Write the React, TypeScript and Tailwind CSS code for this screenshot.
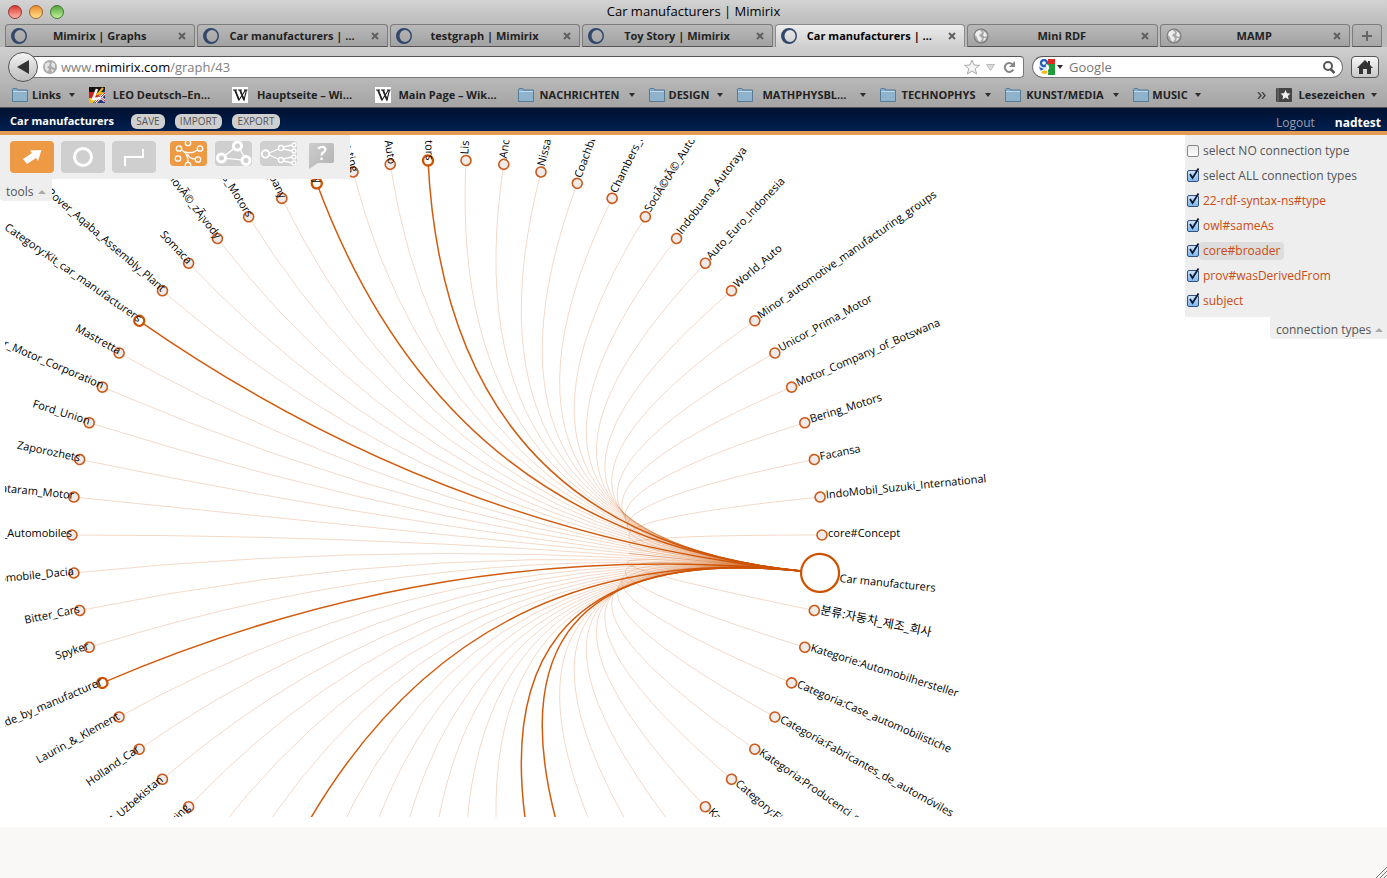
import { ReactNode, useState } from "react";
import clsx from "clsx";

const COUNT = 62;
const ROOT = 61;
const RADIUS = 375;
const ROOT_SIZE = 19;
const STEP = 360 / COUNT;

// nodes are numbered counter-clockwise, starting at three o'clock
const labels: Record<number, string> = {
  0: "core#Concept",
  1: "IndoMobil_Suzuki_International",
  2: "Facansa",
  3: "Bering_Motors",
  4: "Motor_Company_of_Botswana",
  5: "Unicor_Prima_Motor",
  6: "Minor_automotive_manufacturing_groups",
  7: "World_Auto",
  8: "Auto_Euro_Indonesia",
  9: "Indobuana_Autoraya",
  10: "SociÃ©tÃ©_Auto",
  11: "Chambers_M",
  12: "Coachbu",
  13: "Nissa",
  14: "Anc",
  15: "Lis",
  16: "otors",
  17: "Auto",
  18: "r_ting",
  19: "Industry",
  20: "Company",
  21: "s_Motors",
  22: "novÃ©_zÃ¡vody",
  23: "Somaca",
  24: "Rover_Aqaba_Assembly_Plant",
  25: "Category:Kit_car_manufacturers",
  26: "Mastretta",
  27: "r_Motor_Corporation",
  28: "Ford_Union",
  29: "Zaporozhets",
  30: "ataram_Motor",
  31: "_Automobiles",
  32: "omobile_Dacia",
  33: "Bitter_Cars",
  34: "Spyker",
  35: "ade_by_manufacturer",
  36: "Laurin_&_Klement",
  37: "Holland_Car",
  38: "M_Uzbekistan",
  39: "ring",
  54: "Kat",
  55: "Category:Fi",
  56: "Kategoria:Producenci_s",
  57: "Categoría:Fabricantes_de_automóviles",
  58: "Categoria:Case_automobilistiche",
  59: "Kategorie:Automobilhersteller",
  60: "분류:자동차_제조_회사",
  61: "Car manufacturers",
};

const highlighted = [16, 19, 25, 35, 42, 49, 50];
const nodes = Array.from({ length: COUNT }, (_, i) => i);

function point(i: number, radius = RADIUS) {
  const a = (-i * STEP * Math.PI) / 180;
  return { x: radius * Math.cos(a), y: radius * Math.sin(a) };
}

// every edge bends through the centre and stops at the rim of the root node
function Edge({ index }: { index: number }) {
  const from = point(index);
  const to = point(ROOT, RADIUS - ROOT_SIZE);
  const strong = highlighted.includes(index);
  return (
    <path
      d={`M${from.x} ${from.y}Q0 0 ${to.x} ${to.y}`}
      fill="none"
      stroke="#cd5200"
      strokeWidth={strong ? 1.5 : 1}
      strokeOpacity={strong ? 0.95 : 0.22}
    />
  );
}

function Node({ index }: { index: number }) {
  const strong = highlighted.includes(index);
  const root = index === ROOT;
  const left = index > 15 && index < 47;
  const angle = -index * STEP;
  return (
    <g transform={`rotate(${angle}) translate(${RADIUS} 0)`}>
      <circle
        r={root ? ROOT_SIZE : 5}
        fill={root || strong ? "#fff" : "#eeebe9"}
        stroke={root || strong ? "#cd5200" : "#cb5a1c"}
        strokeWidth={root ? 2.2 : strong ? 2.4 : 1.6}
      />
      {labels[index] && (
        <text
          className={index === 60 ? "text-xs" : undefined}
          transform={left ? "rotate(180)" : undefined}
          textAnchor={left ? "end" : "start"}
          x={left ? 0 : root ? 20 : 6}
          y={root ? 7 : 2}
        >
          {labels[index]}
        </text>
      )}
    </g>
  );
}

function Graph() {
  return (
    <svg
      className="block h-[677px] w-full overflow-hidden font-['Open_Sans','Noto_Sans_CJK_KR',sans-serif] text-[11px]"
      fill="#000"
    >
      <g transform="translate(442 395)">
        {nodes
          .filter((i) => !highlighted.includes(i))
          .map((i) => (
            <Edge key={i} index={i} />
          ))}
        {highlighted.map((i) => (
          <Edge key={i} index={i} />
        ))}
        {nodes.map((i) => (
          <Node key={i} index={i} />
        ))}
      </g>
    </svg>
  );
}

function RingIcon() {
  return (
    <svg viewBox="0 0 16 16" className="size-4 shrink-0">
      <path
        fillRule="evenodd"
        fill="#33476b"
        d="M8 0a8 8 0 1 0 0 16A8 8 0 0 0 8 0ZM9 2a5.500 6 0 1 1 0 12a5.500 6 0 1 1 0-12Z"
      />
    </svg>
  );
}

function GlobeIcon() {
  return (
    <svg viewBox="0 0 16 16" className="size-4 shrink-0">
      <circle cx="8" cy="8" r="7.500" fill="#777" />
      <circle cx="8" cy="8" r="6.500" fill="#a9a9a9" />
      <path
        fill="#eee"
        d="M3 4l3-2 2 1 1 2-2 1-1 2 2 1 1 2-2 3-2-2-1-3-2-2zM10 3l3 2 1 3-2 1-2-2 1-2zM11 10l2 0-1 2-2 1z"
      />
    </svg>
  );
}

function FolderIcon() {
  return (
    <svg viewBox="0 0 16 16" className="size-4 shrink-0">
      <path
        d="M.5 4V2.500q0-1 1-1h3q1 0 1 1.500h10v11.500H.5z"
        fill="#86abc8"
        stroke="#557a96"
      />
      <path d="M1 5h14v9H1z" fill="#8fb3cd" />
      <path d="M1 4.500h14" stroke="#c1dbea" />
    </svg>
  );
}

function WikiIcon() {
  return (
    <svg viewBox="0 0 16 16" className="size-4 shrink-0">
      <path d="M0 0h16v16H0z" fill="#fff" />
      <path
        d="M1 3h4M6 3h4M12 3h3.500M3 3l4 10L13.500 3M8 3l4 10 2.500-10"
        fill="none"
        stroke="#222"
        strokeWidth="1.100"
      />
      <path d="M3 3l4 10M8 3l4 10" stroke="#222" strokeWidth="1.800" />
    </svg>
  );
}

function LeoIcon() {
  return (
    <svg viewBox="0 0 16 16" className="size-4 shrink-0">
      <path d="M0 0h16v5H0z" fill="#16120f" />
      <path d="M0 5h16v6H0z" fill="#d3201c" />
      <path d="M0 11h16v5H0z" fill="#f1bb19" />
      <path d="M16 2v14H4z" fill="#263877" />
      <path d="M16 6L6 16M10 9l6 5" stroke="#fff" strokeWidth="2.500" />
      <path d="M16 6L6 16M10 9l6 5" stroke="#d3201c" />
      <path
        d="M8 2L4 12l8-1"
        fill="none"
        stroke="#fff"
        strokeWidth="2.500"
      />
      <path d="M14 1l-5 6 5-1" fill="none" stroke="#f1bb19" strokeWidth="2" />
    </svg>
  );
}

function DownArrow() {
  return (
    <svg viewBox="0 0 6 4" className="h-1 w-1.5 shrink-0">
      <path d="M0 0h6L3 4z" fill="#2d2d2d" />
    </svg>
  );
}

function UpArrow() {
  return (
    <svg viewBox="0 0 8 4" className="h-1 w-2 shrink-0">
      <path d="M0 4h8L4 0z" fill="#aaa" />
    </svg>
  );
}

const tabs = [
  { title: "Mimirix | Graphs", icon: <RingIcon /> },
  { title: "Car manufacturers | …", icon: <RingIcon /> },
  { title: "testgraph | Mimirix", icon: <RingIcon /> },
  { title: "Toy Story | Mimirix", icon: <RingIcon /> },
  { title: "Car manufacturers | …", icon: <RingIcon />, active: true },
  { title: "Mini RDF", icon: <GlobeIcon /> },
  { title: "MAMP", icon: <GlobeIcon /> },
];

function TabStrip() {
  return (
    <div className="flex h-[23px] gap-0.5 px-[5px]">
      {tabs.map((tab, i) => (
        <div
          key={i}
          className={clsx(
            "flex min-w-0 flex-1 items-center rounded-t border-x border-t pr-2 pl-[5px]",
            tab.active
              ? "border-[#8a8a8a] bg-linear-to-b from-[#ededed] to-[#cfcfcf] text-black"
              : "border-b border-[#7c7c7c] border-b-[#555] bg-linear-to-b from-[#b9b9b9] to-[#a2a2a2] pt-px text-[#222]"
          )}
        >
          {tab.icon}
          <button className="min-w-0 flex-1 truncate pr-1.5 text-center font-bold">
            {tab.title}
          </button>
          <button aria-label="Close tab" className="shrink-0">
            <svg viewBox="0 0 8 8" className="size-2">
              <path d="M1 1l6 6M7 1L1 7" stroke="#606060" strokeWidth="2" />
            </svg>
          </button>
        </div>
      ))}
      <button
        aria-label="New tab"
        className="flex w-[30px] items-center justify-center rounded-t border border-[#7c7c7c] border-b-[#555] bg-linear-to-b from-[#b9b9b9] to-[#a6a6a6]"
      >
        <svg viewBox="0 0 10 10" className="size-2.5">
          <path d="M5 0v10M0 5h10" stroke="#666" strokeWidth="2" />
        </svg>
      </button>
    </div>
  );
}

function NavBar() {
  return (
    <div className="flex h-9 items-center gap-2 pt-1 pr-2 pl-2">
      <div className="flex flex-1 items-center">
        <button
          aria-label="Back"
          className="z-10 -mr-4 flex size-[30px] shrink-0 items-center justify-center rounded-full border border-[#555] bg-linear-to-b from-[#f4f4f4] to-[#bdbdbd]"
        >
          <svg viewBox="0 0 12 14" className="h-3.5 w-3">
            <path d="M12 0v14L0 7z" fill="#333" />
          </svg>
        </button>
        <div className="flex h-[22px] flex-1 items-center rounded-r-sm border border-[#777] border-t-[#555] bg-white pr-2 pl-5">
          <svg viewBox="0 0 14 14" className="size-3.5 shrink-0">
            <circle cx="7" cy="7" r="7" fill="#aaa" />
            <path
              fill="#e4e4e4"
              d="M2 4l3-2 2 1-1 3-2 1 2 2-1 3-3-3zM9 2l3 2 0 4-3-1-1-2zM8 9l3 1-2 3z"
            />
          </svg>
          <div className="relative ml-1 flex-1 text-[13px] leading-5">
            <input
              aria-label="Address"
              defaultValue="www.mimirix.com/graph/43"
              className="w-full text-transparent caret-black outline-none"
            />
            <span
              aria-hidden
              className="pointer-events-none absolute inset-0 bg-white text-[#808080]"
            >
              www.<span className="text-black">mimirix.com</span>/graph/43
            </span>
          </div>
          <button aria-label="Bookmark this page">
            <svg viewBox="0 0 16 16" className="size-4">
              <path
                d="M8 1l2 5 5.500.3-4.300 3.500 1.500 5.200L8 12l-4.700 3 1.500-5.200L.5 6.300 6 6z"
                fill="#f4f4f4"
                stroke="#aaa"
              />
            </svg>
          </button>
          <button aria-label="Show history" className="ml-1.5">
            <svg viewBox="0 0 9 7" className="h-[7px] w-[9px]">
              <path d="M.5.500h8L4.500 6.500z" fill="#ddd" stroke="#bbb" />
            </svg>
          </button>
          <button aria-label="Reload" className="ml-2">
            <svg viewBox="0 0 12 12" className="size-3">
              <path
                d="M9.500 3.200A4.500 4.500 0 1 0 10.300 8.500"
                fill="none"
                stroke="#888"
                strokeWidth="2"
              />
              <path d="M12 0v6H6z" fill="#888" />
            </svg>
          </button>
        </div>
      </div>
      <div className="flex h-[22px] w-[311px] items-center rounded-full border border-[#777] border-t-[#555] bg-white pr-[7px] pl-1.5">
        <svg viewBox="0 0 16 16" className="size-4 shrink-0">
          <path d="M9 0h7v5H9z" fill="#e2281e" />
          <path d="M9 5h7v11h-7z" fill="#1f9a3d" />
          <path d="M0 5h9v6H0z" fill="#dfe9f7" />
          <circle cx="5" cy="4" r="3" fill="#fff" stroke="#2760b8" strokeWidth="2.400" />
          <path d="M0 8l5 2-3 2z" fill="#2760b8" />
          <path d="M7 6q4 2 1 5" fill="none" stroke="#fff" strokeWidth="2" />
          <ellipse cx="5.500" cy="13.200" rx="3.500" ry="2.200" fill="#f2b51c" stroke="#fff" />
        </svg>
        <span className="ml-0.5">
          <DownArrow />
        </span>
        <input
          aria-label="Search"
          placeholder="Google"
          className="ml-1.5 min-w-0 flex-1 text-[13px] leading-5 outline-none placeholder:text-[#777]"
        />
        <button aria-label="Go">
          <svg viewBox="0 0 12 13" className="h-[13px] w-3">
            <circle cx="5" cy="5" r="4" fill="none" stroke="#555" strokeWidth="2" />
            <path d="M7.500 8l4 4" stroke="#555" strokeWidth="2.500" />
          </svg>
        </button>
      </div>
      <button
        aria-label="Home"
        className="flex h-[22px] w-7 items-center justify-center rounded-sm border border-[#555] bg-linear-to-b from-[#f8f8f8] to-[#c9c9c9]"
      >
        <svg viewBox="0 0 16 14" className="h-3.5 w-4">
          <path d="M8 0l3 3V1h2v4l3 3h-2v6h-4V9H6v5H2V8H0z" fill="#333" />
        </svg>
      </button>
    </div>
  );
}

interface BookmarkProps {
  icon: ReactNode;
  label: string;
  width: string;
  menu?: boolean;
}

const bookmarks: BookmarkProps[] = [
  { icon: <FolderIcon />, label: "Links", width: "w-[77px]", menu: true },
  { icon: <LeoIcon />, label: "LEO Deutsch–En…", width: "w-[143px]" },
  { icon: <WikiIcon />, label: "Hauptseite – Wi…", width: "w-[143px]" },
  { icon: <WikiIcon />, label: "Main Page – Wik…", width: "w-[143px]" },
  { icon: <FolderIcon />, label: "NACHRICHTEN", width: "w-[131px]", menu: true },
  { icon: <FolderIcon />, label: "DESIGN", width: "w-[88px]", menu: true },
  { icon: <FolderIcon />, label: "MATHPHYSBL…", width: "w-[143px]", menu: true },
  { icon: <FolderIcon />, label: "TECHNOPHYS", width: "w-[125px]", menu: true },
  { icon: <FolderIcon />, label: "KUNST/MEDIA", width: "w-[128px]", menu: true },
  { icon: <FolderIcon />, label: "MUSIC", width: "w-[82px]", menu: true },
];

function Bookmark({ icon, label, width, menu }: BookmarkProps) {
  return (
    <button
      className={clsx(
        "flex shrink-0 items-center pr-3.5 font-bold whitespace-nowrap",
        width
      )}
    >
      {icon}
      <span className={clsx("flex-1 text-center", menu && "pr-1")}>{label}</span>
      {menu && <DownArrow />}
    </button>
  );
}

function BookmarkBar() {
  return (
    <div className="flex h-6 items-center pr-2.5 pl-3 text-[#222]">
      {bookmarks.map((b) => (
        <Bookmark key={b.label} {...b} />
      ))}
      <button aria-label="More bookmarks" className="mr-2.5 ml-auto">
        <svg viewBox="0 0 9 7" className="h-[7px] w-[9px]">
          <path
            d="M1 0l3 3.500L1 7M5 0l3 3.500L5 7"
            fill="none"
            stroke="#444"
            strokeWidth="1.400"
          />
        </svg>
      </button>
      <button className="flex items-center gap-1.5 font-bold">
        <svg viewBox="0 0 16 14" className="h-3.5 w-4">
          <rect width="16" height="14" rx="1" fill="#444" />
          <path d="M2 0v14" stroke="#777" />
          <path
            d="M9.500 2l1.500 3.200 3.500.4-2.600 2.300.8 3.500-3.200-1.800-3.100 1.800.7-3.500-2.600-2.300 3.500-.4z"
            fill="#eee"
          />
        </svg>
        Lesezeichen
        <DownArrow />
      </button>
    </div>
  );
}

function BrowserChrome() {
  return (
    <div className="border-b border-[#555] bg-[#c4c4c4] font-['Open_Sans',sans-serif] text-[11px]">
      <div className="relative flex h-6 items-center justify-center bg-linear-to-b from-[#d3d3d3] to-[#bcbcbc]">
        <div className="absolute left-2 flex gap-[7px]">
          <button
            aria-label="Close"
            className="size-3.5 rounded-full border border-[#973232] bg-linear-to-b from-[#d5302f] to-[#ffb1a8]"
          />
          <button
            aria-label="Minimize"
            className="size-3.5 rounded-full border border-[#a36427] bg-linear-to-b from-[#e88a26] to-[#ffe48b]"
          />
          <button
            aria-label="Zoom"
            className="size-3.5 rounded-full border border-[#3f7a31] bg-linear-to-b from-[#57a540] to-[#bdf296]"
          />
        </div>
        <h1 className="text-[13px] text-black">Car manufacturers | Mimirix</h1>
      </div>
      <div className="bg-[#bababa]">
        <TabStrip />
      </div>
      <div className="bg-linear-to-b from-[#cfcfcf] to-[#a4a4a4]">
        <NavBar />
        <BookmarkBar />
      </div>
    </div>
  );
}

function AppHeader() {
  return (
    <header className="flex h-[27px] items-center border-b-4 border-[#e49c55] bg-linear-to-b from-[#001030] to-[#002050] pt-[3px] pr-1.5 pl-2.5 text-white">
      <h2 className="w-[121px] text-[11px] font-bold whitespace-nowrap">Car manufacturers</h2>
      <div className="flex gap-2.5 text-[10px] leading-[15px] text-[#555]">
        <button className="h-[15px] w-[34px] rounded-md bg-[#cfcfcf]">SAVE</button>
        <button className="h-[15px] w-[47px] rounded-md bg-[#cfcfcf]">IMPORT</button>
        <button className="h-[15px] w-12 rounded-md bg-[#cfcfcf]">EXPORT</button>
      </div>
      <nav className="ml-auto flex gap-5 pt-[3px] text-xs">
        <a href="#logout" className="text-[#9a9dab]">
          Logout
        </a>
        <a href="#user" className="font-bold">
          nadtest
        </a>
      </nav>
    </header>
  );
}

function ToolButton({
  label,
  active,
  small,
  children,
}: {
  label: string;
  active?: boolean;
  small?: boolean;
  children: ReactNode;
}) {
  return (
    <button
      aria-label={label}
      className={clsx(
        "overflow-hidden rounded",
        small ? "h-[25px] w-[37px]" : "h-8 w-11",
        active ? "bg-[#ee9a45]" : "bg-[#cfcfcf]"
      )}
    >
      {children}
    </button>
  );
}

function ToolsPanel() {
  return (
    <div className="absolute top-0 left-0">
      <div className="flex h-11 w-[350px] items-start bg-[#eee] px-2.5 pt-1.5">
        <div className="flex gap-[7px]">
          <ToolButton label="Select" active>
            <svg viewBox="0 0 44 32" className="block">
              <path d="M13 18l9-6-2-2.500L31.500 9l-3.500 11-2-3-9 6z" fill="#fff" />
            </svg>
          </ToolButton>
          <ToolButton label="Add node">
            <svg viewBox="0 0 44 32" className="block">
              <circle cx="22" cy="16" r="8.500" fill="none" stroke="#fff" strokeWidth="3" />
            </svg>
          </ToolButton>
          <ToolButton label="Add connection">
            <svg viewBox="0 0 44 32" className="block">
              <path
                d="M13 25V16H31V8"
                fill="none"
                stroke="#fff"
                strokeWidth="2"
              />
            </svg>
          </ToolButton>
        </div>
        <div className="ml-3.5 flex gap-2">
          <ToolButton label="Circle layout" active small>
            <svg viewBox="0 0 37 25" className="block" fill="none" stroke="#fff" strokeWidth="1.300">
              <circle cx="18" cy="2" r="2.700" />
              <circle cx="9" cy="7.500" r="2.700" />
              <circle cx="30" cy="7.500" r="2.700" />
              <circle cx="8" cy="17.500" r="2.700" />
              <circle cx="28" cy="18.500" r="2.700" />
              <circle cx="18" cy="24" r="2.700" />
              <path d="M11.500 9q7 4 6.500 12M27.500 9q-5 4-13 2M25.500 18q-6 0-8-5" />
            </svg>
          </ToolButton>
          <ToolButton label="Force layout" small>
            <svg viewBox="0 0 37 25" className="block" fill="none" stroke="#fff" strokeWidth="3">
              <circle cx="22.500" cy="5" r="4" />
              <circle cx="6.500" cy="17" r="4" />
              <circle cx="31" cy="19.500" r="4" />
              <path d="M10 14.500l9-7M25 8.500l4 7M11 17.300l15.500 1.500" strokeWidth="1.300" />
            </svg>
          </ToolButton>
          <ToolButton label="Tree layout" small>
            <svg viewBox="0 0 37 25" className="block" fill="none" stroke="#fff" strokeWidth="1.300">
              <circle cx="5.500" cy="13" r="3.700" strokeWidth="2" />
              <circle cx="21" cy="7" r="2.500" />
              <circle cx="21" cy="19" r="2.500" />
              <circle cx="34" cy="4" r="2" />
              <circle cx="34" cy="10" r="2" />
              <circle cx="34" cy="16" r="2" />
              <circle cx="34" cy="22" r="2" />
              <path d="M9 12l9.500-4M9 14l9.500 4M23.500 6l8.500-2M23.500 8l8.500 2M23.500 18l8.500-2M23.500 20l8.500 2" />
            </svg>
          </ToolButton>
        </div>
        <button aria-label="Help" className="ml-3 pt-0.5">
          <svg viewBox="0 0 25 26" className="block h-[26px] w-[25px]">
            <defs>
              <linearGradient id="help" x1="0" x2="1" y1="0" y2="1">
                <stop offset="0" stopColor="#cdcdcd" />
                <stop offset="1" stopColor="#b2b2b2" />
              </linearGradient>
            </defs>
            <path d="M2 0h21q2 0 2 2v16q0 2-2 2H9L0 26V2q0-2 2-2z" fill="url(#help)" />
            <path
              d="M9 5.500q6-3.500 7.500.5 0 2-2 3.300-2 1.200-2 3.200M12.500 14.500v2.500"
              fill="none"
              stroke="#fff"
              strokeWidth="2.200"
            />
          </svg>
        </button>
      </div>
      <button className="flex h-[22px] w-[52px] items-center justify-between rounded-b bg-[#eee] px-1.5 pt-[3px] text-xs text-[#555]">
        tools
        <UpArrow />
      </button>
    </div>
  );
}

const connectionTypes = [
  { name: "select NO connection type", checked: false },
  { name: "select ALL connection types", checked: true },
  { name: "22-rdf-syntax-ns#type", checked: true, type: true },
  { name: "owl#sameAs", checked: true, type: true },
  { name: "core#broader", checked: true, type: true },
  { name: "prov#wasDerivedFrom", checked: true, type: true },
  { name: "subject", checked: true, type: true },
];

function ConnectionPanel() {
  const [checked, setChecked] = useState(connectionTypes.map((c) => c.checked));

  const toggle = (i: number) =>
    setChecked(checked.map((value, j) => (i === j ? !value : value)));

  return (
    <div className="absolute top-0 right-0 flex flex-col items-end text-xs">
      <div className="w-[202px] bg-[#eee] pt-[3px] pb-1 pl-0.5">
        {connectionTypes.map((c, i) => (
          <label key={c.name} className="flex h-[25px] items-center">
            <span className="relative size-3">
              <input
                type="checkbox"
                checked={checked[i]}
                onChange={() => toggle(i)}
                className="block size-3 appearance-none rounded-xs border border-[#888] bg-linear-to-b from-[#e8e8e8] to-white checked:border-[#34507c] checked:from-[#cfe3f8] checked:to-[#7db9ee]"
              />
              {checked[i] && (
                <svg
                  viewBox="0 0 14 14"
                  className="pointer-events-none absolute -top-0.5 left-0 size-3.5"
                >
                  <path d="M3 6l2.500 4L11.500.5" fill="none" stroke="#0c1a33" strokeWidth="1.800" />
                </svg>
              )}
            </span>
            <span
              className={clsx(
                "rounded px-1 leading-[18px]",
                c.type ? "text-[#cb4b12]" : "text-[#555]",
                c.name === "core#broader" && "bg-[#ddd]"
              )}
            >
              {c.name}
            </span>
          </label>
        ))}
      </div>
      <button className="flex h-[22px] w-[117px] items-center justify-between rounded-bl bg-[#eee] pt-[3px] pr-1 pl-1.5 text-[#555]">
        connection types
        <UpArrow />
      </button>
    </div>
  );
}

export default function App() {
  return (
    <div className="flex min-h-screen flex-col bg-white font-['Open_Sans',sans-serif]">
      <BrowserChrome />
      <AppHeader />
      <main className="relative pt-[5px] pb-2.5 pl-[5px]">
        <Graph />
        <ToolsPanel />
        <ConnectionPanel />
      </main>
      <footer className="flex flex-1 items-end justify-end bg-[#f9f8f6]">
        <svg viewBox="0 0 12 12" className="size-3">
          <path d="M1 12L12 1M5 12l7-7M9 12l3-3" stroke="#777" />
        </svg>
      </footer>
    </div>
  );
}
